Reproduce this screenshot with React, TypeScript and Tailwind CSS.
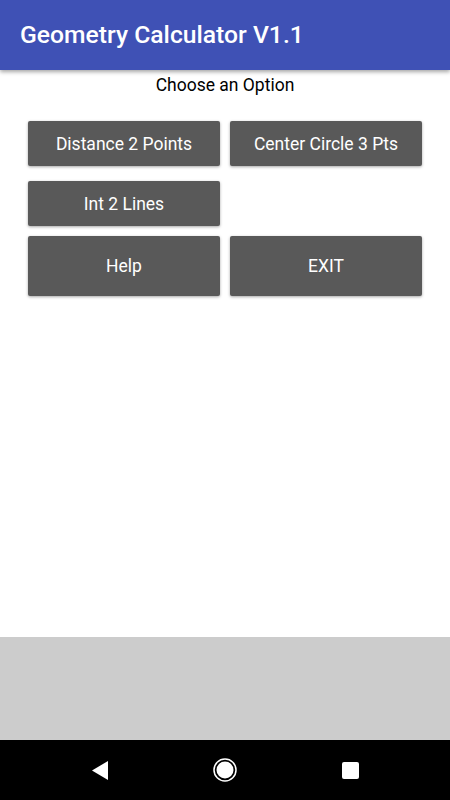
export default function App() {
  return (
    <div className="w-[450px] h-[800px] flex flex-col bg-white font-['Roboto',sans-serif]">
      <header className="h-[70px] shrink-0 bg-[#3f51b5] flex items-center px-5 shadow-[0_2px_4px_rgba(0,0,0,0.35)] relative z-10">
        <h1 className="text-white text-[24.7px] font-medium leading-none">Geometry Calculator V1.1</h1>
      </header>

      <main className="flex-1 flex flex-col">
        <p className="text-center text-black text-[17.5px] leading-none mt-[7px]">Choose an Option</p>

        <div className="grid grid-cols-2 gap-x-[10px] px-[28px] mt-[26px]">
          <Btn label="Distance 2 Points" />
          <Btn label="Center Circle 3 Pts" />
          <div className="mt-[15px]">
            <Btn label="Int 2 Lines" />
          </div>
          <div />
          <div className="mt-[10px]">
            <Btn label="Help" tall />
          </div>
          <div className="mt-[10px]">
            <Btn label="EXIT" tall />
          </div>
        </div>
      </main>

      <div className="h-[103px] shrink-0 bg-[#cccccc]" />

      <nav className="h-[60px] shrink-0 bg-black flex items-center justify-between pl-[92px] pr-[91px]">
        <svg width="16" height="19" viewBox="0 0 16 19">
          <path d="M16 0 L16 19 L0 9.5 Z" fill="white" />
        </svg>
        <svg width="24" height="24" viewBox="0 0 24 24">
          <circle cx="12" cy="12" r="11" fill="none" stroke="white" strokeWidth="1.5" />
          <circle cx="12" cy="12" r="8.5" fill="white" />
        </svg>
        <div className="w-[17px] h-[17px] bg-white rounded-[2px]" />
      </nav>
    </div>
  );
}

function Btn({ label, tall }: { label: string; tall?: boolean }) {
  return (
    <button
      className={`w-full ${tall ? 'h-[60px]' : 'h-[45px]'} bg-[#595959] rounded-[2px] text-white text-[17.5px] leading-none pt-[3px] shadow-[0_1px_3px_rgba(0,0,0,0.35)] flex items-center justify-center`}
    >
      {label}
    </button>
  );
}
